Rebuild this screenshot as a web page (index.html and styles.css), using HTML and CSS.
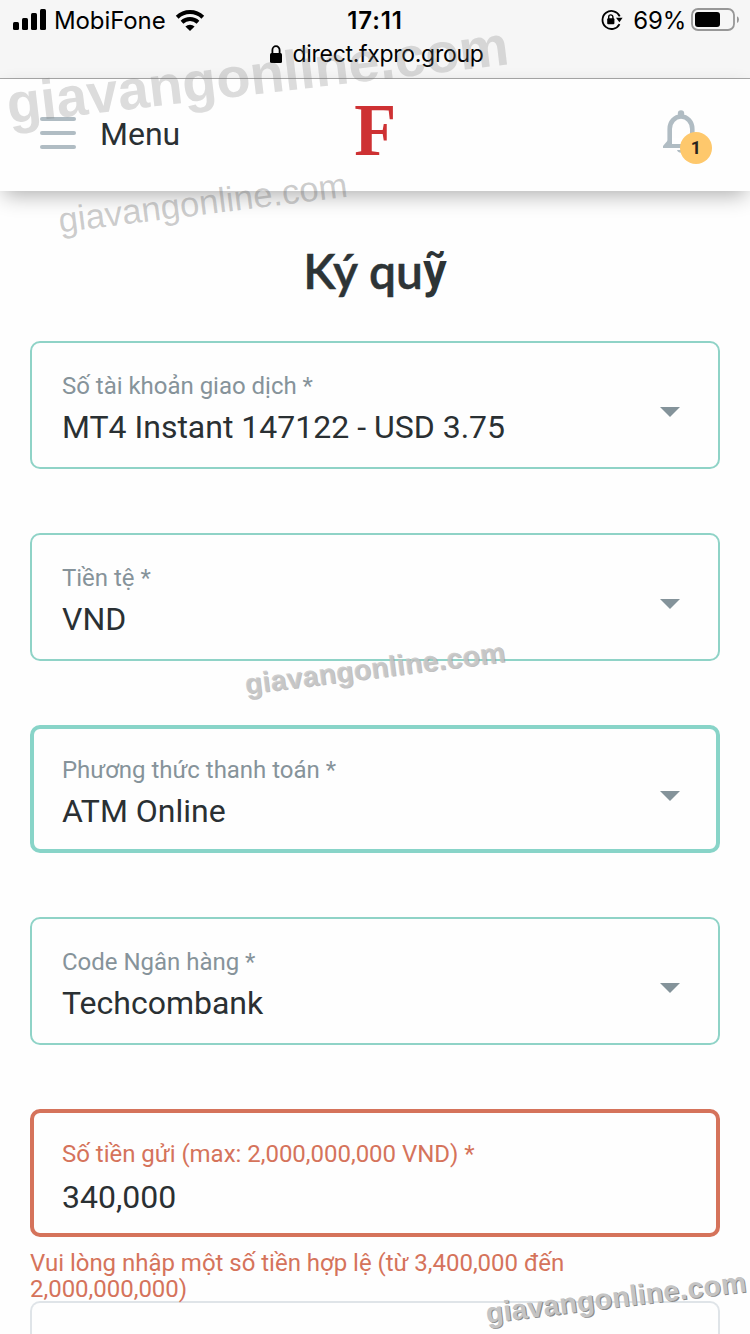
FILE: index.html
```
<!DOCTYPE html>
<html lang="vi">
<head>
    <meta charset="utf-8">
    <title>Ký quỹ</title>
    <link rel="stylesheet" href="styles.css">
</head>
<body>
    <div class="browser-bar">
        <div class="status">
            <div class="carrier">
                <svg width="34" height="22" viewBox="0 0 34 22">
                    <rect x="0" y="13" width="6" height="8" rx="1.5"/>
                    <rect x="9" y="9" width="6" height="12" rx="1.5"/>
                    <rect x="18" y="4" width="6" height="17" rx="1.5"/>
                    <rect x="27" y="0" width="6" height="21" rx="1.5"/>
                </svg>
                <span class="carrier-name">MobiFone</span>
                <svg class="wifi" width="30" height="23" viewBox="0 0 30 23">
                    <path d="M2.2 8.2a18.5 18.5 0 0 1 25.6 0M7 13.3a11.6 11.6 0 0 1 16 0" fill="none" stroke="#000" stroke-width="4"/>
                    <path d="M15 22l-4.6-4.5a6.8 6.8 0 0 1 9.2 0z"/>
                </svg>
            </div>
            <div class="time">17:11</div>
            <div class="power">
                <svg width="22" height="22" viewBox="0 0 22 22">
                    <path d="M18.7 7.3a9 9 0 1 0-.2 7.8" fill="none" stroke="#000" stroke-width="1.8"/>
                    <path d="M15 8.7h6.6l-3.2 4.5z"/>
                    <rect x="6.2" y="9.3" width="7.2" height="6" rx="1"/>
                    <path d="M7.7 10V8a2.1 2.1 0 0 1 4.2 0v2" fill="none" stroke="#000" stroke-width="1.4"/>
                </svg>
                <span class="percent">69%</span>
                <svg width="48" height="24" viewBox="0 0 48 24">
                    <rect x="1" y="1" width="42" height="21" rx="6" fill="none" stroke="#979797" stroke-width="1.8"/>
                    <rect x="4" y="4" width="25" height="15" rx="3"/>
                    <path d="M46 8.2q2 1 2 3.4t-2 3.4z" fill="#979797"/>
                </svg>
            </div>
        </div>
        <div class="address">
            <svg width="12" height="19" viewBox="0 0 12 19">
                <rect x="0" y="8" width="12" height="10" rx="1.5"/>
                <path d="M2.4 9V5a3.6 3.8 0 0 1 7.2 0v4" fill="none" stroke="#000" stroke-width="1.8"/>
            </svg>
            <span>direct.fxpro.group</span>
        </div>
    </div>

    <header class="header">
        <div class="menu">
            <div class="burger"><i></i><i></i><i></i></div>
            <span class="menu-text">Menu</span>
        </div>
        <div class="logo">F</div>
        <div class="bell">
            <svg width="36" height="44" viewBox="0 0 36 44" fill="none" stroke="#b0bcc3">
                <circle cx="18" cy="3.5" r="3.2" fill="#b0bcc3" stroke="none"/>
                <path d="M6.7 34V19a11.3 12.5 0 0 1 22.6 0v15" stroke-width="4.6"/>
                <path d="M0 38v-2l6-7h24l6 7v2z" fill="#b0bcc3" stroke="none"/>
                <path d="M9 28h18v6H9z" fill="#fff" stroke="none"/>
                <path d="M14 40a4.2 4 0 0 0 8 0z" fill="#b0bcc3" stroke="none"/>
            </svg>
            <span class="badge">1</span>
        </div>
    </header>

    <main class="content">
        <h1>Ký qu<span class="alt">ỹ</span></h1>

        <div class="field">
            <div>
                <div class="label">Số tài khoản giao dịch *</div>
                <div class="value">MT4 Instant 147122 - USD 3.75</div>
            </div>
            <span class="arrow"></span>
        </div>
        <div class="field">
            <div>
                <div class="label">Tiền tệ *</div>
                <div class="value">VND</div>
            </div>
            <span class="arrow"></span>
        </div>
        <div class="field active">
            <div>
                <div class="label">Phương thức thanh toán *</div>
                <div class="value">ATM Online</div>
            </div>
            <span class="arrow"></span>
        </div>
        <div class="field">
            <div>
                <div class="label">Code Ngân hàng *</div>
                <div class="value">Techcombank</div>
            </div>
            <span class="arrow"></span>
        </div>
        <div class="field error">
            <div>
                <div class="label">Số tiền gửi (max: 2,000,000,000 VND) *</div>
                <div class="value">340,000</div>
            </div>
        </div>
        <div class="error-message">Vui lòng nhập một số tiền hợp lệ (từ 3,400,000 đến<br>2,000,000,000)</div>
        <div class="field empty"></div>
    </main>

    <svg class="watermarks" width="750" height="1334" viewBox="0 0 750 1334">
        <text class="wm-large" transform="translate(9 123.5) rotate(-6.75)" textLength="505">giavangonline.com</text>
        <text class="wm-thin" transform="translate(60 232.5) rotate(-7.1)" textLength="291">giavangonline.com</text>
        <text class="wm-small" transform="translate(246 694) rotate(-7.1)" textLength="262">giavangonline.com</text>
        <text class="wm-small wm-dark" transform="translate(487 1323) rotate(-6.9)" textLength="262">giavangonline.com</text>
    </svg>
</body>
</html>
```
FILE: styles.css
```
* {
    box-sizing: border-box;
}

body {
    position: relative;
    margin: 0;
    width: 750px;
    height: 1334px;
    overflow: hidden;
    background-color: #fefefe;
    color: #2a3033;
    font-family: Roboto, "Liberation Sans", sans-serif;
}

svg {
    display: block;
}

.browser-bar {
    height: 79px;
    background-color: #f6f6f6;
    border-bottom: 1px solid #a9a9a9;
    color: #000000;
    font-family: Inter, "Liberation Sans", sans-serif;
}

.status {
    display: grid;
    grid-template-columns: 1fr auto 1fr;
    align-items: center;
    height: 40px;
    padding: 0 11px 0 13px;
    font-size: 24px;
}

.carrier,
.power {
    display: flex;
    align-items: center;
}

.power {
    justify-content: flex-end;
}

.carrier-name {
    margin-left: 7px;
    letter-spacing: -0.1px;
}

.wifi {
    margin-left: 9px;
}

.time {
    padding-right: 2px;
    font-weight: 600;
    font-size: 24px;
    letter-spacing: 0.9px;
}

.percent {
    margin: 0 5px 0 10px;
    letter-spacing: -0.2px;
}

.address {
    display: flex;
    justify-content: center;
    align-items: center;
    gap: 11px;
    height: 28px;
    padding-left: 3px;
    font-size: 23px;
    letter-spacing: -0.3px;
}

.header {
    position: relative;
    display: grid;
    grid-template-columns: 1fr auto 1fr;
    align-items: center;
    height: 112px;
    padding: 0 38px 0 40px;
    background-color: #fefefe;
    box-shadow: 0 8px 20px -4px rgba(0, 0, 0, 0.32);
}

.menu {
    display: flex;
    align-items: center;
    gap: 24px;
    padding-bottom: 4px;
    font-size: 32px;
}

.menu-text {
    padding-top: 2px;
}

.burger {
    display: flex;
    flex-direction: column;
    gap: 10px;
}

.burger i {
    width: 36px;
    height: 4px;
    border-radius: 2px;
    background-color: #b0bcc3;
}

.logo {
    color: #ce3133;
    font-family: "Liberation Serif", serif;
    font-size: 73px;
    font-weight: bold;
    line-height: 112px;
    transform: translate(-1px, -4px) scaleX(0.94);
}

.bell {
    position: relative;
    justify-self: end;
    width: 49px;
    height: 50px;
}

.badge {
    position: absolute;
    right: 0;
    top: 22px;
    width: 32px;
    height: 32px;
    border-radius: 50%;
    background-color: #fec86c;
    color: #29241c;
    font-size: 18px;
    font-weight: bold;
    line-height: 32px;
    text-align: center;
}

.content {
    padding: 0 30px;
}

h1 {
    height: 150px;
    margin: 0;
    padding-top: 50px;
    color: #2d3436;
    font-family: Lato, sans-serif;
    font-size: 48px;
    font-weight: 600;
    line-height: 60px;
    text-align: center;
    -webkit-text-stroke: 0.5px #2d3436;
}

.alt {
    font-family: Roboto, sans-serif;
    font-weight: 600;
    vertical-align: 2px;
    line-height: 1;
    -webkit-text-stroke: 0;
}

.field {
    display: flex;
    justify-content: space-between;
    align-items: center;
    height: 128px;
    margin-bottom: 64px;
    padding: 0 38px 0 30px;
    border: 2px solid #8fd3c7;
    border-radius: 10px;
}

.field.active {
    padding: 0 36px 0 28px;
    border: 4px solid #88d4c8;
}

.field.error {
    margin-bottom: 13px;
    padding: 0 28px;
    border: 4px solid #d5735b;
}

.field.empty {
    height: 33px;
    margin-bottom: 0;
    border-color: #dfe4e8;
    border-bottom: none;
    border-radius: 10px 10px 0 0;
}

.label {
    padding-top: 9px;
    color: #86939a;
    font-size: 24px;
    line-height: 36px;
    letter-spacing: -0.02px;
}

.value {
    font-size: 32px;
    line-height: 47px;
}

.error .label,
.error-message {
    color: #d5735b;
}

.error .label {
    padding-top: 10px;
}

.error .value {
    padding-top: 2px;
}

.error-message {
    height: 51px;
    font-size: 24px;
    line-height: 26px;
    letter-spacing: -0.02px;
}

.arrow {
    margin-top: 14px;
    border-top: 10px solid #84939a;
    border-left: 10px solid transparent;
    border-right: 10px solid transparent;
}

.watermarks {
    position: absolute;
    left: 0;
    top: 0;
    font-family: "Liberation Sans", Arial, sans-serif;
    pointer-events: none;
}

.wm-large {
    font-size: 56px;
    font-weight: bold;
    fill: rgba(120, 120, 120, 0.25);
}

.wm-thin {
    font-size: 35px;
    fill: rgba(110, 110, 110, 0.35);
}

.wm-small {
    font-size: 28.5px;
    font-weight: bold;
    fill: rgba(200, 200, 200, 0.85);
    text-shadow: 1px 1px 0 rgba(150, 150, 150, 0.7);
}

.wm-dark {
    fill: #c4c4c4;
    text-shadow: 1px 1px 0 #8c8c8c;
}
```
